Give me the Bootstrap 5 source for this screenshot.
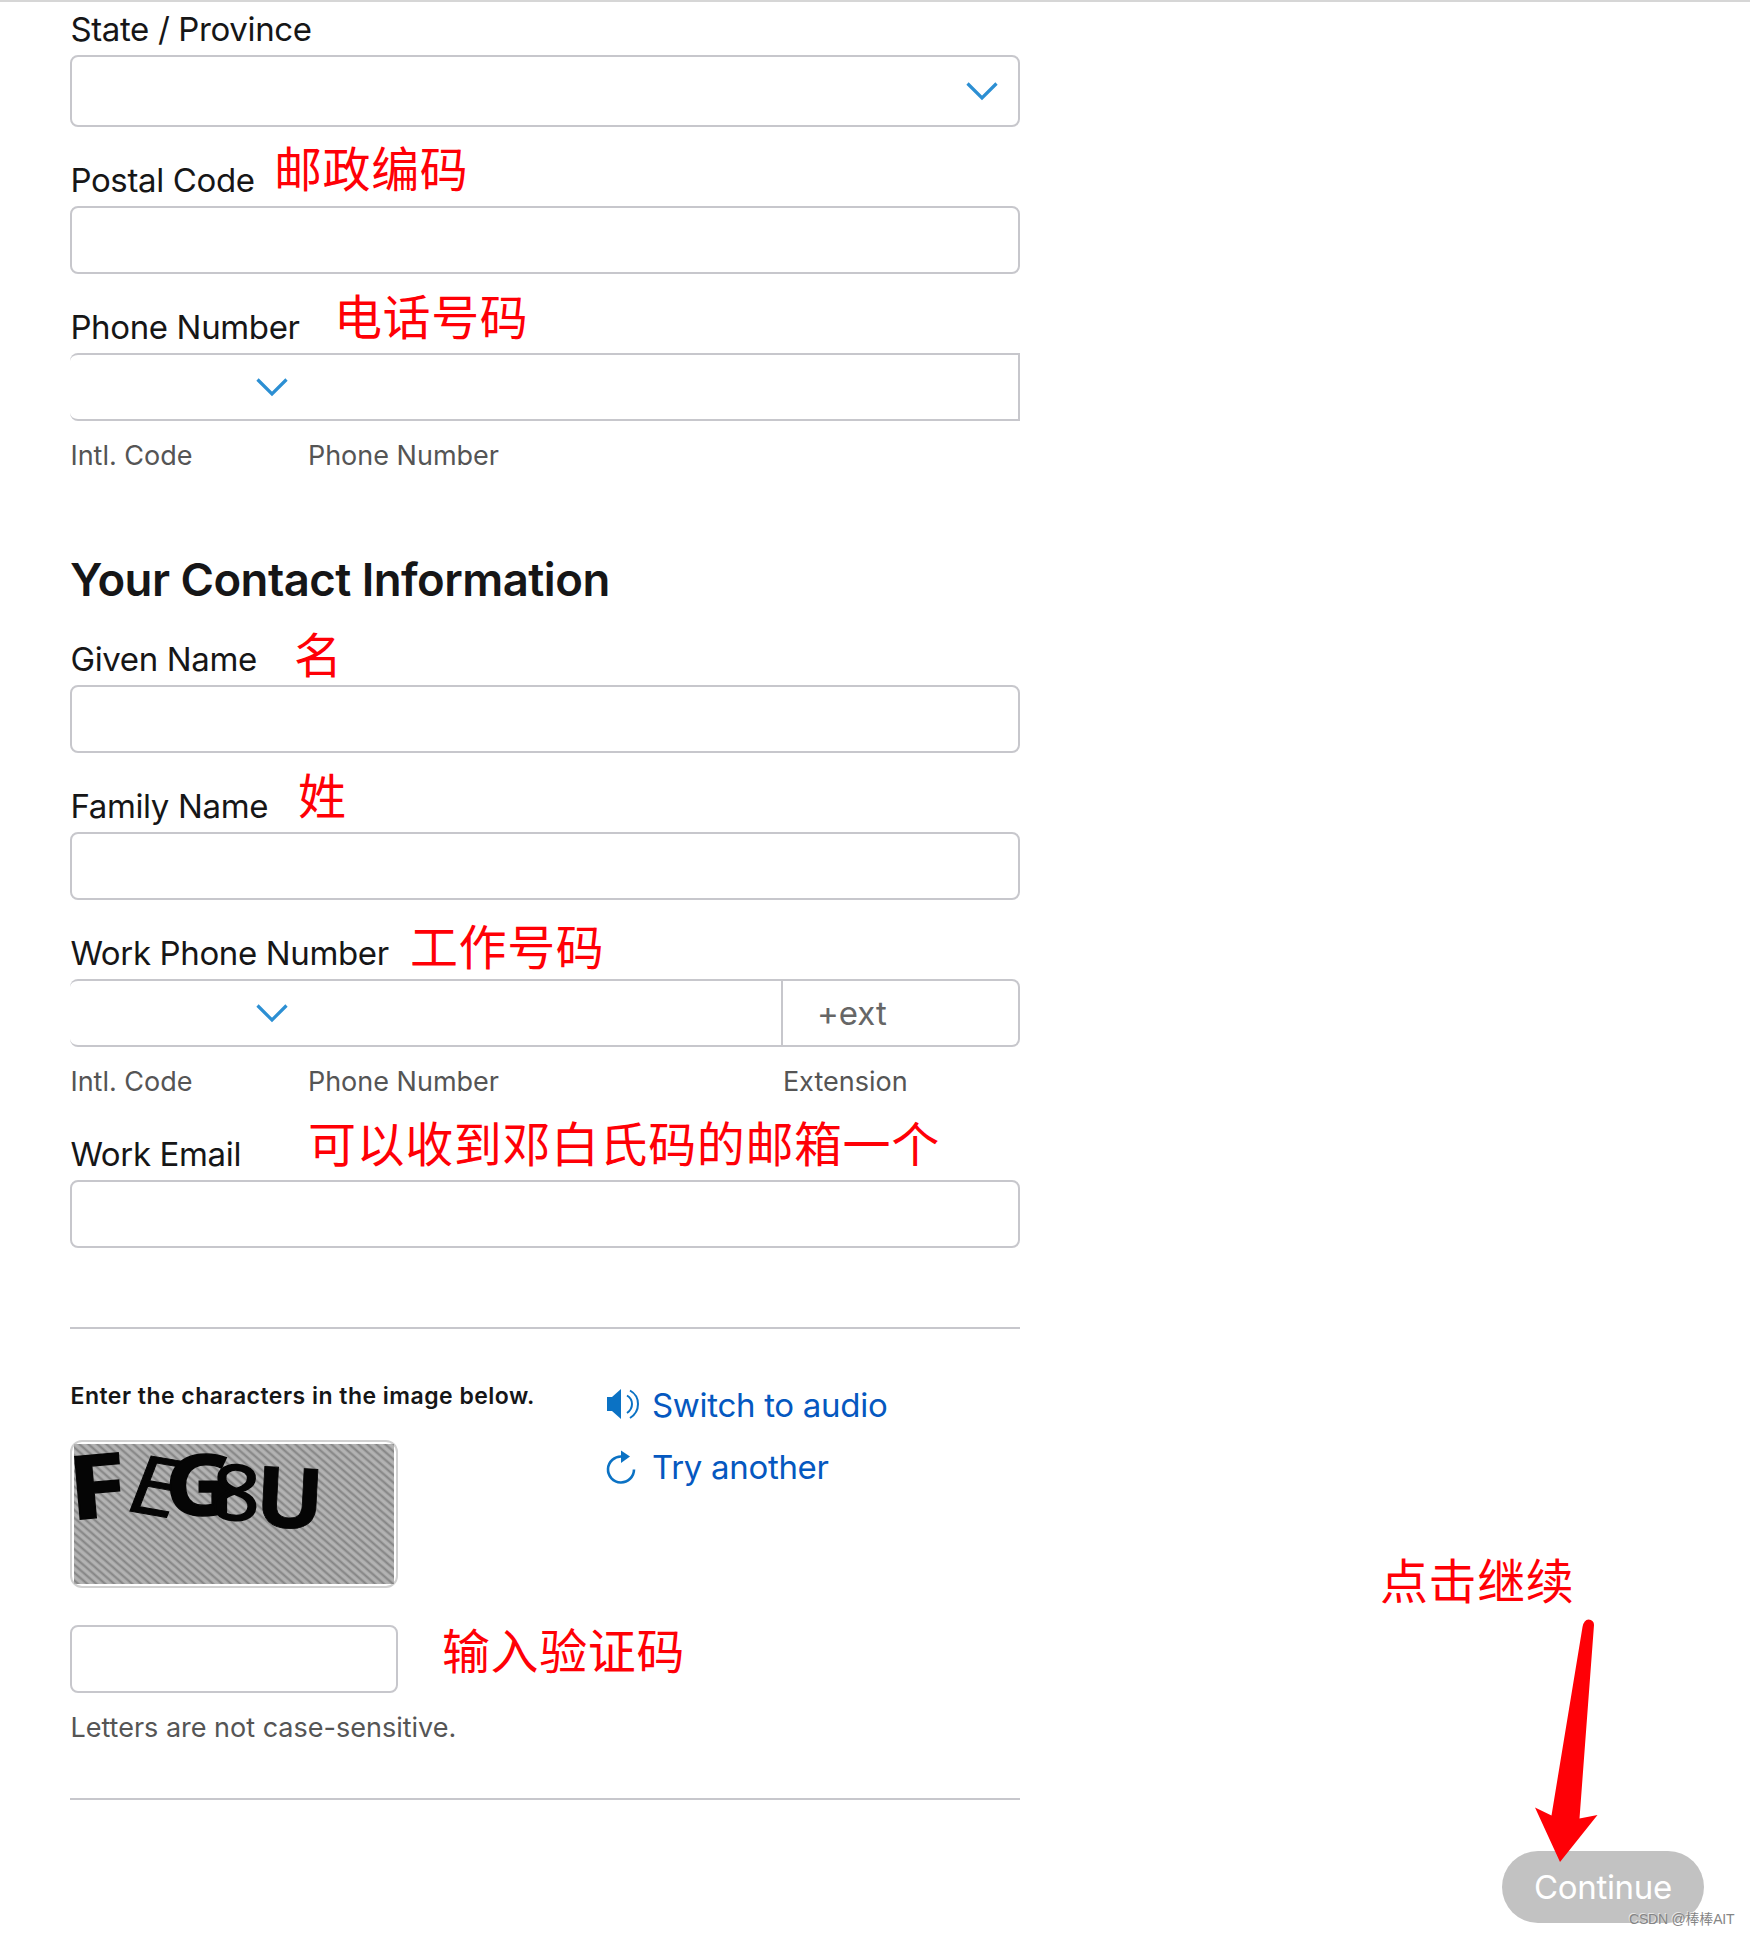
<!DOCTYPE html>
<html lang="en">
<head>
<meta charset="utf-8">
<meta name="viewport" content="width=device-width, initial-scale=1">
<title>Contact Information</title>
<link href="https://cdn.jsdelivr.net/npm/bootstrap@5.3.0/dist/css/bootstrap.min.css" rel="stylesheet">
<style>
body{font-family:Inter,"Noto Sans CJK SC",sans-serif;color:#161617;background:#fff;overflow-x:hidden}
.page{width:1750px;height:1936px;border-top:2px solid #d6d6d6;padding:5px 46px 0 70px;overflow:hidden}
.form-col{width:950px}
.field{position:relative;margin-bottom:31px}
.form-label{display:block;width:max-content;font-size:33px;line-height:44px;letter-spacing:-.36px;margin-bottom:4px;padding-left:.4px}
.form-control{height:68px;border:2px solid #c7c7cc;border-radius:8px;font-size:33px;padding:0 34px;box-shadow:none}
.picker{height:72px;border:2px solid #c7c7cc;border-radius:8px;padding-right:19px}
.phone{height:68px;border:2px solid #c7c7cc;border-left:0;border-radius:8px 0 0 8px}
.phone.with-ext{border-radius:8px}
.code{width:238px;padding-right:19px}
.ext{width:237px;border-left:2px solid #c7c7cc;padding:2px 0 0 34px;font-size:33px;color:#666}
.hint{font-size:27px;line-height:34px;color:#555}
.hints{margin-top:18px;padding-left:.4px}
.hints .c1{width:237.500px}.hints .c2{width:475px}
.title{font-size:45.500px;line-height:54px;font-weight:600;letter-spacing:-.53px;margin:80px 0 30px}
.rule{height:2px;background:#c7c7cc}
.note{position:absolute;font-family:"Noto Sans CJK SC",sans-serif;font-size:48px;line-height:48px;letter-spacing:.6px;color:#ff0006;white-space:nowrap}
.prompt{font-size:23px;line-height:28px;font-weight:600;letter-spacing:.48px;padding-left:.5px}
.captcha{width:328px;height:148px;border:2px solid #d0d0d0;border-radius:12px;padding:2px}
.alt-link{font-size:33px;line-height:44px;letter-spacing:-.3px;color:#0558c0;text-decoration:none}
.btn-go{width:202px;height:72px;border-radius:36px;background:#c2c2c2;color:#fff;font-size:33px;line-height:44px;letter-spacing:-.33px;padding:0}
.credit{position:absolute;font-family:"Liberation Sans","Noto Sans CJK SC",sans-serif;font-size:14px;line-height:18px;letter-spacing:-.2px;color:#858585;text-shadow:-1px -1px 0 #fff9;white-space:nowrap;left:1629px;top:1908px}
</style>
</head>
<body>
<main class="page position-relative">
<form class="form-col">
  <div class="field"><label class="form-label">State / Province</label>
    <div class="picker d-flex align-items-center justify-content-end"><svg width="34" height="20" viewBox="0 0 34 20" fill="none" stroke="#2c8fd3" stroke-width="3.200"><path d="M2.500 2.500 17 17 31.500 2.500"/></svg></div></div>
  <div class="field"><label class="form-label">Postal Code</label><span class="note" style="left:204px;top:-16px">邮政编码</span><input class="form-control"></div>
  <div><div class="position-relative"><label class="form-label">Phone Number</label><span class="note" style="left:264px;top:-15px">电话号码</span></div>
    <div class="phone d-flex"><div class="code d-flex align-items-center justify-content-end"><svg width="34" height="20" viewBox="0 0 34 20" fill="none" stroke="#2c8fd3" stroke-width="3.200"><path d="M2.500 2.500 17 17 31.500 2.500"/></svg></div></div>
    <div class="hints hint d-flex"><span class="c1">Intl. Code</span><span class="c2">Phone Number</span></div></div>
  <h2 class="title">Your Contact Information</h2>
  <div class="field"><label class="form-label">Given Name</label><span class="note" style="left:224px;top:-9px">名</span><input class="form-control"></div>
  <div class="field"><label class="form-label">Family Name</label><span class="note" style="left:228px;top:-15px">姓</span><input class="form-control"></div>
  <div class="position-relative"><label class="form-label">Work Phone Number</label><span class="note" style="left:340px;top:-11px">工作号码</span>
    <div class="phone with-ext d-flex justify-content-between"><div class="code d-flex align-items-center justify-content-end"><svg width="34" height="20" viewBox="0 0 34 20" fill="none" stroke="#2c8fd3" stroke-width="3.200"><path d="M2.500 2.500 17 17 31.500 2.500"/></svg></div><div class="ext d-flex align-items-center">+ext</div></div>
    <div class="hints hint d-flex"><span class="c1">Intl. Code</span><span class="c2">Phone Number</span><span>Extension</span></div></div>
  <div class="field mb-0" style="margin-top:33px"><label class="form-label">Work Email</label><span class="note" style="left:238px;top:-15px">可以收到邓白氏码的邮箱一个</span><input class="form-control"></div>
  <div class="rule" style="margin-top:79px"></div>
  <div class="d-flex" style="margin-top:51px">
    <div style="width:535px">
      <div class="prompt" style="margin-top:2px">Enter the characters in the image below.</div>
      <div class="captcha" style="margin-top:30px">
        <svg class="d-block" width="320" height="140" viewBox="0 0 320 140"><defs><pattern id="hatch" width="6" height="5.900" patternUnits="userSpaceOnUse" patternTransform="rotate(41)"><rect width="6" height="6" fill="#b3b3b3"/><rect width="6" height="3" y="1" fill="#9f9f9f"/><rect width="6" height="1.400" y="1.800" fill="#838383"/></pattern></defs>
        <rect width="320" height="140" fill="url(#hatch)"/>
        <g fill="#050505" stroke="#050505" font-family="Open Sans,sans-serif"><text font-weight="700" font-size="88" stroke-width="1.500" transform="translate(-3 76) rotate(-5) scale(1.200 1)">F</text><text font-size="80" stroke-width="1" transform="matrix(1.150 .2 -.37 .965 47 65.500)">E</text><text font-weight="700" font-size="85" stroke-width="1.500" transform="translate(91 71) scale(1.120 1)">G</text><text font-size="76" stroke-width="2" transform="translate(136 74.500) rotate(3) scale(1.130 1)">8</text><text font-weight="700" font-size="84" stroke-width=".8" transform="translate(180 82) rotate(3) scale(1.080 1)">U</text></g></svg>
      </div>
      <div class="position-relative" style="margin-top:37px;width:328px"><input class="form-control"><span class="note" style="left:372px;top:-1px">输入验证码</span></div>
      <div class="hint" style="margin-top:18px;padding-left:.4px">Letters are not case-sensitive.</div>
    </div>
    <div>
      <a class="alt-link d-flex align-items-center" style="margin-top:3px"><svg width="47" height="32" viewBox="0 0 47 32"><path d="M2 8H7L16 0V30L7 22H2Z" fill="#0b72c4"/><path d="M22 6.500Q27 9.500 27 15T22 24M25 1.500Q33 6 33 15T25 29" fill="none" stroke="#0b72c4" stroke-width="2"/></svg>Switch to audio</a>
      <a class="alt-link d-flex align-items-center" style="margin-top:18px"><svg width="47" height="34" viewBox="0 0 47 34"><path d="M17 6.500A13 13 0 1 0 29 19.500" fill="none" stroke="#0b72c4" stroke-width="2.600"/><path d="M16 .5 25 6.500 16 13Z" fill="#0b72c4"/></svg>Try another</a>
    </div>
  </div>
  <div class="rule" style="margin-top:53px"></div>
</form>
<div class="d-flex justify-content-end" style="margin-top:51px"><button type="button" class="btn btn-go">Continue</button></div>
<span class="note" style="left:1380px;top:1552px">点击继续</span>
<svg class="position-absolute" style="left:1530px;top:1612px" width="75" height="255" viewBox="1530 1614 75 255"><path d="M1560 1862 1535 1807.500 1551.500 1815.500 1582.500 1627Q1584 1619.500 1588.500 1619.500 1594 1620 1594 1625L1579.500 1818.500 1597.500 1815Z" fill="#ff0006"/></svg>
<span class="credit">CSDN @棒棒AIT</span>
</main>
<script src="https://cdn.jsdelivr.net/npm/bootstrap@5.3.0/dist/js/bootstrap.bundle.min.js"></script>
</body>
</html>
